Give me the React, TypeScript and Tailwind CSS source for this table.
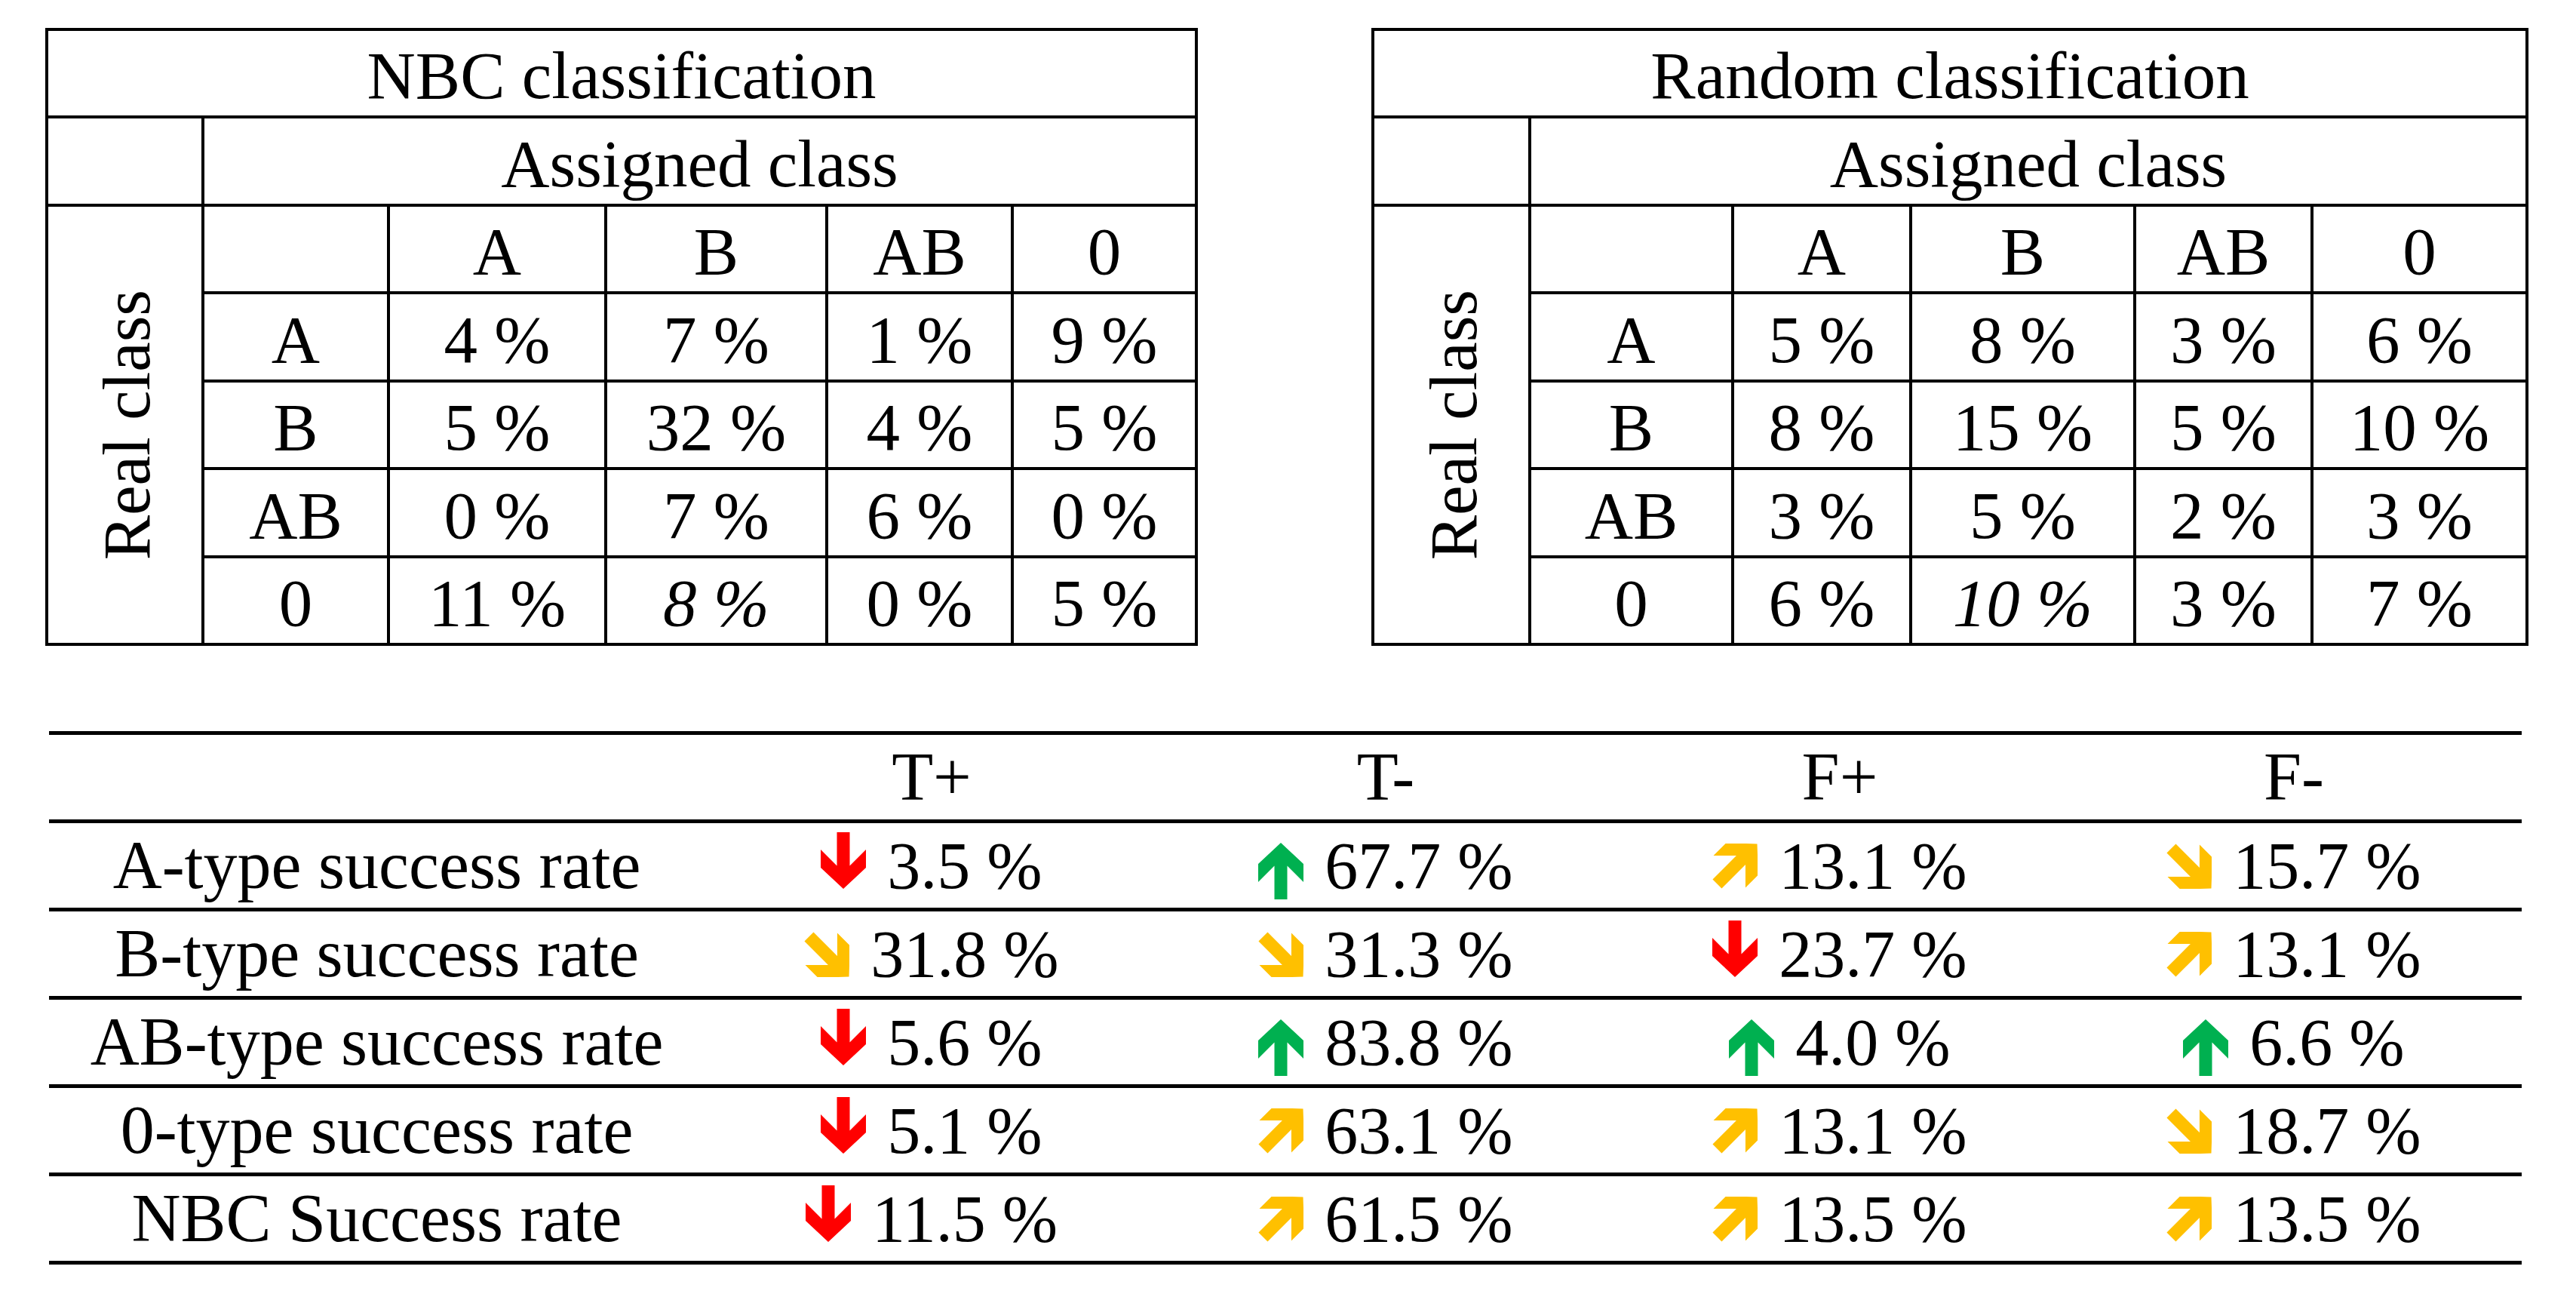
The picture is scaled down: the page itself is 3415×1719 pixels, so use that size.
import React from "react";

const UP = "M30 0L60 28V52L38.5 30.5V75H21.5V30.5L0 52V28Z";
const DOWN = "M21.5 0H38.5V44.5L60 23V47L30 75L0 47V23L21.5 44.5Z";

type Dir = "up" | "down" | "ne" | "se";

function Arrow({ dir }: { dir: Dir }) {
  if (dir === "up")
    return (
      <svg width="60" height="75" viewBox="0 0 60 75" className="mt-[26px] shrink-0">
        <path d={UP} fill="#00b050" />
      </svg>
    );
  if (dir === "down")
    return (
      <svg width="60" height="75" viewBox="0 0 60 75" className="mt-[12px] shrink-0">
        <path d={DOWN} fill="#ff0000" />
      </svg>
    );
  const g = (
    <g transform="translate(59.5 0.5) rotate(45) translate(-30 0)">
      <path d={UP} fill="#ffc000" />
    </g>
  );
  return (
    <svg width="60" height="60" viewBox="0 0 60 60" className="mt-[27px] shrink-0">
      {dir === "ne" ? g : <g transform="translate(0 60) scale(1 -1)">{g}</g>}
    </svg>
  );
}

type Cell = { v: string; i?: boolean };

function Matrix({
  title,
  data,
  colsClass,
}: {
  title: string;
  data: Cell[][];
  colsClass: string;
}) {
  const heads = ["A", "B", "AB", "0"];
  const cell = "bg-white flex items-center justify-center pt-[7px]";
  return (
    <div
      className={`grid bg-black p-[4px] gap-[4px] grid-rows-[112px_113px_112px_113px_112px_113px_112px] ${colsClass}`}
    >
      <div className={`${cell} col-span-6`}>{title}</div>
      <div className={cell}></div>
      <div className={`${cell} col-span-5`}>Assigned class</div>
      <div className="bg-white flex items-center justify-center row-span-5 pl-[6px]">
        <span className="[writing-mode:vertical-rl] rotate-180">Real class</span>
      </div>
      <div className={cell}></div>
      {heads.map((h) => (
        <div key={h} className={cell}>
          {h}
        </div>
      ))}
      {data.map((row, ri) => (
        <React.Fragment key={ri}>
          <div className={cell}>{heads[ri]}</div>
          {row.map((c, ci) => (
            <div key={ci} className={`${cell} ${c.i ? "italic" : ""}`}>
              {c.v}
            </div>
          ))}
        </React.Fragment>
      ))}
    </div>
  );
}

const c = (v: string, i?: boolean): Cell => ({ v, i });

const nbc: Cell[][] = [
  [c("4 %"), c("7 %"), c("1 %"), c("9 %")],
  [c("5 %"), c("32 %"), c("4 %"), c("5 %")],
  [c("0 %"), c("7 %"), c("6 %"), c("0 %")],
  [c("11 %"), c("8 %", true), c("0 %"), c("5 %")],
];

const rnd: Cell[][] = [
  [c("5 %"), c("8 %"), c("3 %"), c("6 %")],
  [c("8 %"), c("15 %"), c("5 %"), c("10 %")],
  [c("3 %"), c("5 %"), c("2 %"), c("3 %")],
  [c("6 %"), c("10 %", true), c("3 %"), c("7 %")],
];

type Val = [Dir, string];
const rows: { label: string; vals: Val[] }[] = [
  { label: "A-type success rate", vals: [["down", "3.5 %"], ["up", "67.7 %"], ["ne", "13.1 %"], ["se", "15.7 %"]] },
  { label: "B-type success rate", vals: [["se", "31.8 %"], ["se", "31.3 %"], ["down", "23.7 %"], ["ne", "13.1 %"]] },
  { label: "AB-type success rate", vals: [["down", "5.6 %"], ["up", "83.8 %"], ["up", "4.0 %"], ["up", "6.6 %"]] },
  { label: "0-type success rate", vals: [["down", "5.1 %"], ["ne", "63.1 %"], ["ne", "13.1 %"], ["se", "18.7 %"]] },
  { label: "NBC Success rate", vals: [["down", "11.5 %"], ["ne", "61.5 %"], ["ne", "13.5 %"], ["ne", "13.5 %"]] },
];

export default function App() {
  const rowCls =
    "grid grid-cols-[869px_602px_602px_602px_602px] h-[117px] border-b-[5px] border-black";
  const txt = "mt-[12px] leading-[88px] whitespace-nowrap";
  return (
    <div className="w-[3415px] h-[1719px] bg-white text-black font-['Liberation_Serif',serif] pt-[37px]">
      <div className="flex gap-[230px] pl-[60px] text-[89px] leading-none">
        <Matrix
          title="NBC classification"
          data={nbc}
          colsClass="grid-cols-[203px_242px_284px_289px_242px_240px]"
        />
        <Matrix
          title="Random classification"
          data={rnd}
          colsClass="grid-cols-[204px_265px_232px_293px_231px_281px]"
        />
      </div>
      <div className="ml-[65px] mt-[113px] w-[3278px] border-t-[5px] border-black text-[90px]">
        <div className={rowCls}>
          <div />
          {["T+", "T-", "F+", "F-"].map((h) => (
            <div key={h} className="flex justify-center">
              <span className={txt}>{h}</span>
            </div>
          ))}
        </div>
        {rows.map((r) => (
          <div key={r.label} className={rowCls}>
            <div className="flex justify-center">
              <span className={txt}>{r.label}</span>
            </div>
            {r.vals.map(([d, v], i) => (
              <div key={i} className="flex justify-center items-start">
                <Arrow dir={d} />
                <span className={`mt-[13px] leading-[88px] whitespace-nowrap text-[88px] ml-[28px]`}>{v}</span>
              </div>
            ))}
          </div>
        ))}
      </div>
    </div>
  );
}
